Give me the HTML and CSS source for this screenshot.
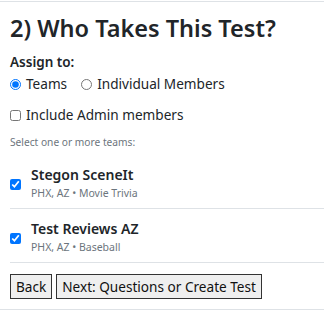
FILE: index.html
```html
<!DOCTYPE html>
<html>
<head>
<meta charset="utf-8">
<link rel="stylesheet" href="styles.css">
</head>
<body>
<div class="page">
  <h2 class="title">2) Who Takes This Test?</h2>
  <div class="label">Assign to:</div>
  <div class="radios">
    <label class="opt"><input type="radio" name="assign" class="radio" checked> Teams</label>
    <label class="opt opt-2"><input type="radio" name="assign" class="radio"> Individual Members</label>
  </div>
  <label class="opt admin"><input type="checkbox" class="check"> Include Admin members</label>
  <div class="hint">Select one or more teams:</div>
  <ul class="teams">
    <li class="team">
      <input type="checkbox" class="check team-check" checked>
      <div class="team-info">
        <div class="team-name">Stegon SceneIt</div>
        <div class="team-sub">PHX, AZ • Movie Trivia</div>
      </div>
    </li>
    <li class="team">
      <input type="checkbox" class="check team-check" checked>
      <div class="team-info">
        <div class="team-name">Test Reviews AZ</div>
        <div class="team-sub">PHX, AZ • Baseball</div>
      </div>
    </li>
  </ul>
  <div class="actions">
    <button class="btn">Back</button>
    <button class="btn">Next: Questions or Create Test</button>
  </div>
</div>
</body>
</html>
```

FILE: styles.css
```css
html, body {
  margin: 0;
  padding: 0;
  background: #fff;
}
body {
  font-family: "Noto Sans", "Open Sans", sans-serif;
  color: #212529;
}
.page {
  margin-top: 1px;
  border-top: 1px solid #dee2e6;
  border-bottom: 1px solid #dee2e6;
  padding-left: 10px;
  padding-bottom: 10px;
}
.title {
  margin: 12px 0 9px;
  font-size: 23.5px;
  line-height: 29px;
  font-weight: 600;
}
.label {
  font-size: 13.5px;
  line-height: 20px;
  font-weight: 600;
  margin-bottom: 1px;
}
.radios {
  display: flex;
}
.opt {
  display: flex;
  align-items: center;
  font-size: 13.6px;
  line-height: 22px;
}
.opt-2 {
  margin-left: 14px;
}
.radio, .check {
  width: 11px;
  height: 11px;
  margin: 0 5px 0 0;
}
.admin {
  margin-top: 9px;
}
.hint {
  margin-top: 8px;
  font-size: 10.2px;
  line-height: 16px;
  color: #6c757d;
}
.teams {
  list-style: none;
  margin: 5px 0 11px;
  padding: 0;
}
.team {
  display: flex;
  align-items: center;
  padding: 10px 0 7px;
  border-bottom: 1px solid #dee2e6;
}
.team-check {
  margin: 2px 10px 0 0;
}
.team-name {
  font-size: 14px;
  line-height: 20px;
  font-weight: 600;
}
.team-sub {
  font-size: 10.5px;
  line-height: 16px;
  color: #6c757d;
}
.actions {
  display: flex;
  gap: 4px;
}
.btn {
  font-family: inherit;
  font-size: 13.6px;
  line-height: 23px;
  height: 25px;
  padding: 0 5px;
  border: 1px solid #333;
  border-radius: 0;
  background: #efefef;
  color: #111;
}
```
